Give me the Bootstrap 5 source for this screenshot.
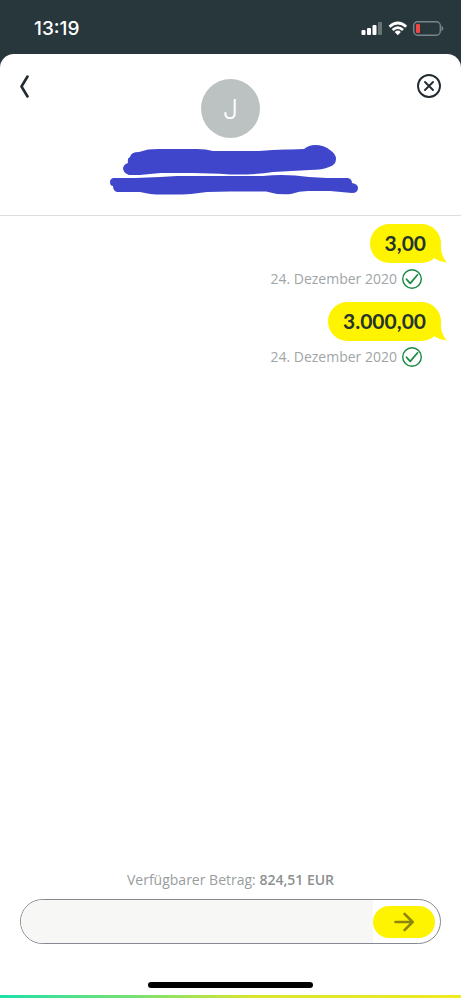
<!DOCTYPE html>
<html lang="de">
<head>
<meta charset="utf-8">
<meta name="viewport" content="width=device-width, initial-scale=1">
<title>Zahlungen</title>
<link href="https://cdn.jsdelivr.net/npm/bootstrap@5.3.0/dist/css/bootstrap.min.css" rel="stylesheet">
<style>
  body { background: #28373c; font-family: Lato, "Open Sans", sans-serif; }
  svg { display: block; }
  .status-bar { height: 54px; padding: 4px 17px 0 34px; color: #fff; }
  .clock { font: 500 19px/24px Inter, sans-serif; }
  .sheet { background: #fff; border-radius: 14px 14px 0 0; }
  .sheet-head { height: 162px; padding: 20px 20px 0; border-bottom: 1px solid #dedede; }
  .icon-btn { width: 24px; height: 24px; color: #222b30; }
  .avatar { width: 59px; height: 59px; margin-top: 5px; background: #bcc2c2; color: #fff; font: 300 27px/61px Inter, sans-serif; }
  .scribble { margin-top: 7px; }
  .thread { padding: 8px 20px 0; }
  .entry { margin-bottom: 12px; }
  .bubble { height: 39px; padding: 0 15px; border-radius: 20px; background: #fff400; color: #26352b; font-size: 21px; font-weight: 700; line-height: 38px; }
  .bubble-tail { right: -6px; bottom: 0; }
  .stamp { margin-top: 5px; padding-right: 18px; font: 14px/22px "Open Sans", sans-serif; color: #a0a5a6; }
  .balance { font: 14px/20px "Open Sans", sans-serif; color: #989d9e; margin-bottom: 9px; }
  .balance strong { font-weight: 600; color: #8b9091; }
  .amount-box { height: 45px; margin: 0 20px; padding-right: 5px; border: 1px solid #858a90; border-radius: 23px; background: #fff; overflow: hidden; }
  .amount-input { min-width: 0; border: 0; background: #f7f7f5; padding: 0 20px; outline: 0; font-size: 18px; }
  .send { width: 62px; height: 32px; border-radius: 16px; background: #fff400; color: #8c8610; }
  .home-bar { width: 165px; height: 6px; margin: 38px auto 7px; border-radius: 3px; background: #000; }
  .edge { height: 3px; background: linear-gradient(90deg, #1ee0a8, #7be070 30%, #d9e52f 55%, #f0ea20); }
</style>
</head>
<body>
<div class="d-flex flex-column min-vh-100">
  <div class="status-bar d-flex align-items-center justify-content-between">
    <span class="clock">13:19</span>
    <svg width="83" height="18" viewBox="0 0 83 18" role="img" aria-label="Mobilfunk, WLAN, Akku">
      <g fill="#fff"><rect x=".5" y="10" width="4" height="5" rx="1"/><rect x="6" y="8" width="4" height="7" rx="1"/><rect x="11.500" y="5" width="4" height="10" rx="1"/><rect x="17" y="2" width="4" height="13" rx="1" opacity=".3"/></g>
      <g fill="none" stroke="#fff" stroke-width="2.700"><path d="M28.500 6.800Q36.800-.8 45.200 6.800M31.600 10.100Q36.800 5.200 42 10.100"/></g>
      <path d="M33.700 11.900Q36.800 9.300 39.900 11.900L36.800 15.200Z" fill="#fff"/>
      <rect x="52.700" y="1.700" width="26.600" height="13.600" rx="4" fill="none" stroke="#7b8588" stroke-width="1.400"/>
      <rect x="55" y="4" width="4" height="9" rx="1" fill="#f04744"/>
      <path d="M81 6.500q2 2 0 4z" fill="#7b8588" stroke="#7b8588"/>
    </svg>
  </div>

  <main class="sheet flex-grow-1 d-flex flex-column">
    <header class="sheet-head d-flex justify-content-between align-items-start">
      <button type="button" class="icon-btn btn p-0 border-0" aria-label="Zurück">
        <svg width="24" height="24" viewBox="0 0 24 24" fill="none" stroke="currentColor" stroke-width="2.600" stroke-linecap="round" stroke-linejoin="round"><path d="M7.500 2.500L1.500 12.500L7.500 22.500"/></svg>
      </button>
      <div class="d-flex flex-column align-items-center">
        <div class="avatar rounded-circle text-center">J</div>
        <svg class="scribble" width="256" height="50" viewBox="-6 0 256 50" fill="#4046cc" role="img" aria-label="Name geschwärzt">
          <path d="M19 18Q18 13 21 12Q22 7 30 7L39 4.500Q44 4 50 4L88 4Q97 4 104 6L150 6Q168 4 182 4.500L195 4Q200 0 206 0Q215 0 221 5Q227 9 227 14Q227 20 220 22Q214 25 201 25L164 27Q146 30 121 29.500Q100 28 84 28L52 28Q40 29 31 30L20 30Q14 28 14 23Q15 19 19 18Z"/>
          <path d="M4 33L26 33L51 32L68 31L154 31Q176 28.500 200 32L218 33L239 33Q243 34 243 38Q249 39 249 43Q249 48 243 48L221 46L199 46Q190 46 182 49Q168 50 157 46.500L121 46.500L98 47Q80 50 58 49.500Q42 50 31 47L8 47Q4 46 4 41Q1 41 1 37Q1 34 4 33Z"/>
        </svg>
      </div>
      <button type="button" class="icon-btn btn p-0 border-0" aria-label="Schließen">
        <svg width="24" height="24" viewBox="0 0 24 24" fill="none" stroke="currentColor" stroke-width="1.900" stroke-linecap="round"><circle cx="12" cy="12" r="11"/><path d="M8 8l8 8M16 8l-8 8"/></svg>
      </button>
    </header>

    <section class="thread flex-grow-1">
      <div class="entry d-flex flex-column align-items-end">
        <div class="bubble position-relative">3,00
          <svg class="bubble-tail position-absolute" width="22" height="20" viewBox="0 0 22 20" fill="#fff400" aria-hidden="true"><path d="M16 0C15.500 8 17 14 22 19.500Q14 18.500 9 15Z"/></svg>
        </div>
        <div class="stamp d-flex align-items-center gap-1">24. Dezember 2020
          <svg width="22" height="22" viewBox="0 0 22 22" fill="none" stroke="#178a42" role="img" aria-label="Gesendet"><circle cx="11" cy="11" r="9.300" stroke-width="1.400"/><path d="M5.500 11.200l3.700 4.200l7.400-8.600" stroke-width="1.700" stroke-linecap="round" stroke-linejoin="round"/></svg>
        </div>
      </div>
      <div class="entry d-flex flex-column align-items-end">
        <div class="bubble position-relative">3.000,00
          <svg class="bubble-tail position-absolute" width="22" height="20" viewBox="0 0 22 20" fill="#fff400" aria-hidden="true"><path d="M16 0C15.500 8 17 14 22 19.500Q14 18.500 9 15Z"/></svg>
        </div>
        <div class="stamp d-flex align-items-center gap-1">24. Dezember 2020
          <svg width="22" height="22" viewBox="0 0 22 22" fill="none" stroke="#178a42" role="img" aria-label="Gesendet"><circle cx="11" cy="11" r="9.300" stroke-width="1.400"/><path d="M5.500 11.200l3.700 4.200l7.400-8.600" stroke-width="1.700" stroke-linecap="round" stroke-linejoin="round"/></svg>
        </div>
      </div>
    </section>

    <footer>
      <label for="amount" class="balance d-block text-center">Verfügbarer Betrag: <strong>824,51 EUR</strong></label>
      <div class="amount-box d-flex align-items-center">
        <input id="amount" type="text" inputmode="decimal" class="amount-input flex-grow-1 h-100">
        <button type="button" class="send btn p-0 border-0 d-flex align-items-center justify-content-center" aria-label="Senden">
          <svg width="22" height="22" viewBox="0 0 22 22" fill="none" stroke="currentColor" stroke-width="2.600" stroke-linecap="round" stroke-linejoin="round"><path d="M2.500 11h17M11.500 2.800l8.200 8.200l-8.200 8.200"/></svg>
        </button>
      </div>
      <div class="home-bar"></div>
      <div class="edge"></div>
    </footer>
  </main>
</div>
<script src="https://cdn.jsdelivr.net/npm/bootstrap@5.3.0/dist/js/bootstrap.bundle.min.js"></script>
</body>
</html>
